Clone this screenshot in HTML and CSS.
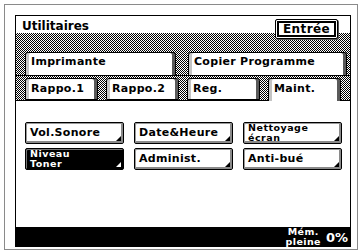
FILE: index.html
```html
<!DOCTYPE html>
<html lang="fr">
<head>
<meta charset="utf-8">
<link rel="stylesheet" href="styles.css">
</head>
<body>
<div class="screen">
  <div class="window">
    <div class="header">
      <span class="title">Utilitaires</span>
      <span class="enter">Entrée</span>
    </div>
    <div class="tabband">
      <div class="row1">
        <div class="tab wide1">Imprimante</div>
        <div class="tab wide2">Copier Programme</div>
      </div>
      <div class="row2">
        <div class="tab small">Rappo.1</div>
        <div class="tab small">Rappo.2</div>
        <div class="tab small">Reg.</div>
        <div class="tab small active">Maint.</div>
      </div>
    </div>
    <div class="body">
      <div class="grid">
        <div class="btn">Vol.Sonore</div>
        <div class="btn">Date&amp;Heure</div>
        <div class="btn two">Nettoyage<br>écran</div>
        <div class="btn two inv">Niveau<br>Toner</div>
        <div class="btn">Administ.</div>
        <div class="btn">Anti-bué</div>
      </div>
    </div>
    <div class="footer">
      <span class="mem">Mém.<br>pleine</span>
      <span class="pct">0%</span>
    </div>
  </div>
</div>
</body>
</html>
```
FILE: styles.css
```css
html, body {
  margin: 0;
  padding: 0;
  background: #fff;
}
body {
  font-family: "DejaVu Sans", sans-serif;
  font-weight: bold;
  color: #000;
}
.screen {
  margin: 4px 0 0 4px;
  width: 339px;
  height: 232px;
  border: 1px solid #8a8a8a;
  padding: 10px 3px 2px 10px;
}
.window {
  width: 334px;
  height: 231px;
  border: 1px solid #000;
  border-bottom: 0;
  display: flex;
  flex-direction: column;
}
.header {
  height: 17px;
  display: flex;
  align-items: flex-start;
  justify-content: space-between;
  padding: 0 12px 0 6px;
}
.title {
  font-size: 12px;
  line-height: 16px;
  margin-top: 2px;
}
.enter {
  position: relative;
  z-index: 2;
  margin-top: 3px;
  width: 55px;
  height: 14px;
  border: 1px solid #000;
  box-shadow: inset 0 0 0 1px #fff, inset 0 0 0 3px #000, 1px 1px 0 #555;
  padding: 2px 3px;
  background: #fff;
  font-size: 12px;
  line-height: 14px;
  text-align: center;
  border-radius: 2px;
  letter-spacing: 0.4px;
}
.tabband {
  height: 67px;
  background: repeating-conic-gradient(#000 0 25%, #fff 0 50%) 0 0 / 2px 2px;
  padding-top: 19px;
  box-sizing: border-box;
}
.tab {
  background: #fff;
  border: 1px solid #000;
  border-bottom: 0;
  border-radius: 3px 3px 0 0;
  box-shadow: inset 3px 0 0 #c4c4c4, inset -3px 0 0 #5a5a5a;
  font-size: 11px;
  line-height: 20px;
  padding-left: 5px;
  box-sizing: border-box;
  letter-spacing: 0.3px;
}
.row1 {
  display: flex;
  gap: 12px;
  padding-left: 9px;
  height: 23px;
  border-bottom: 1px solid #000;
}
.row1 .tab {
  height: 23px;
  line-height: 17px;
}
.wide1 { width: 151px; }
.wide2 { width: 159px; }
.row2 {
  display: flex;
  gap: 8px;
  padding-left: 9px;
  margin-top: 2px;
  height: 22px;
}
.row2 .tab {
  height: 22px;
  width: 73px;
  border-bottom: 1px solid #000;
}
.row2 .tab.active {
  border-bottom: 0;
  height: 23px;
  position: relative;
  z-index: 1;
}
.body {
  flex: 1;
  background: #fff;
  border-top: 1px solid #000;
  padding: 21px 0 0 9px;
}
.grid {
  display: grid;
  grid-template-columns: 99px 99px 99px;
  grid-auto-rows: 22px;
  column-gap: 10px;
  row-gap: 4px;
}
.btn {
  position: relative;
  border: 1px solid #000;
  border-radius: 2px;
  box-shadow: inset 1px 1px 0 #9a9a9a, inset -2px -2px 0 #8a8a8a;
  font-size: 11px;
  line-height: 20px;
  padding-left: 4px;
  letter-spacing: 0.3px;
}
.btn::after {
  content: "";
  position: absolute;
  right: 2px;
  bottom: 2px;
  width: 0;
  height: 0;
  border-left: 5px solid transparent;
  border-bottom: 5px solid #000;
}
.btn.two {
  font-size: 9.5px;
  line-height: 10px;
  padding-top: 0;
  letter-spacing: 0.5px;
}
.btn.inv {
  background: #000;
  color: #fff;
  box-shadow: inset 1px 1px 0 #777;
}
.btn.inv::after {
  border-bottom-color: #fff;
}
.footer {
  height: 20px;
  flex: none;
  background: #000;
  color: #fff;
  display: flex;
  justify-content: flex-end;
  align-items: center;
  padding-right: 2px;
}
.mem {
  font-size: 9.5px;
  line-height: 10px;
  text-align: center;
  margin-right: 5px;
  letter-spacing: 0.4px;
}
.pct {
  font-size: 13px;
}
```
